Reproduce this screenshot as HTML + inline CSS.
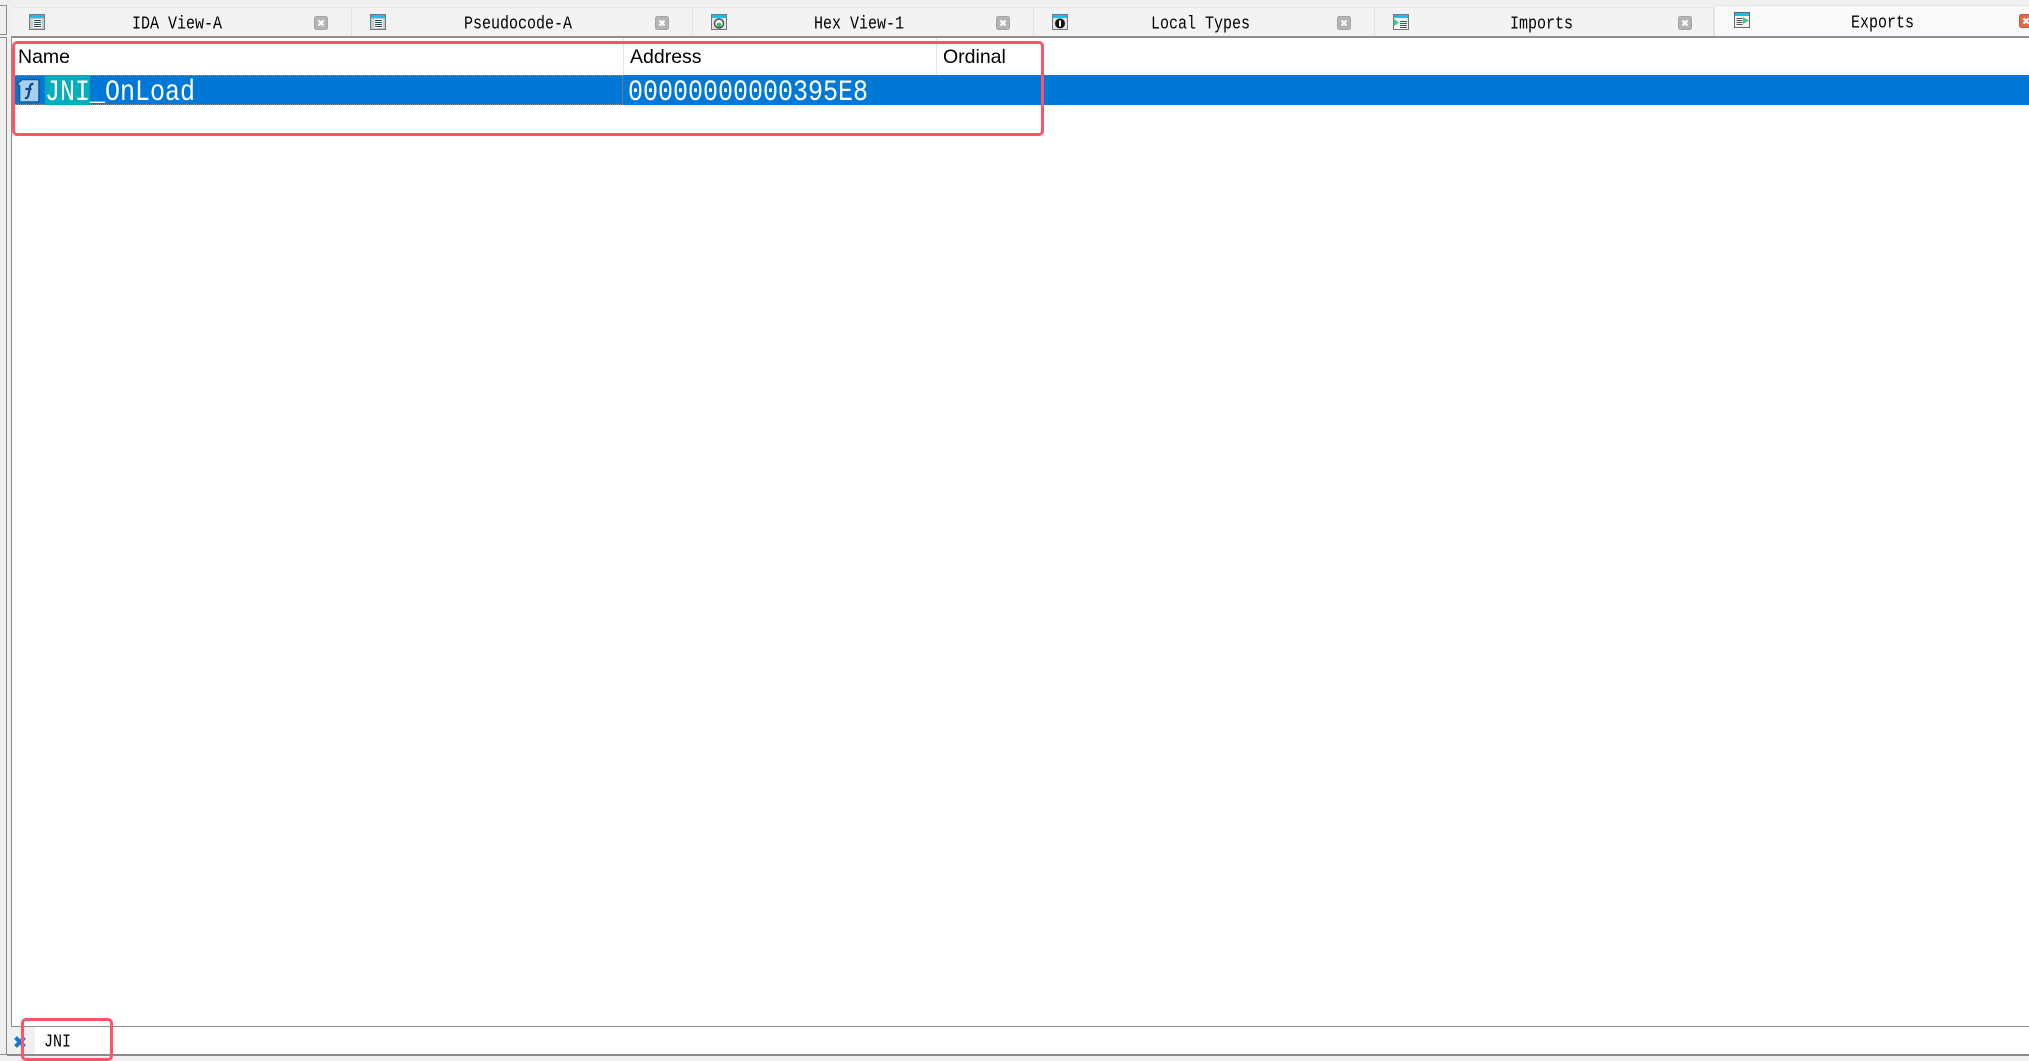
<!DOCTYPE html>
<html><head><meta charset="utf-8"><style>
html,body{margin:0;padding:0;width:2029px;height:1061px;overflow:hidden;background:#f0f0f0}
div,span,svg{position:absolute}
.tab{top:7px;height:29px;background:#f3f3f3;border-top:1px solid #e6e6e6;border-right:1px solid #e2e2e2;box-sizing:border-box}
.t{font:15px "Liberation Mono",monospace;color:#000;white-space:pre;transform:scaleY(1.2);transform-origin:0 50%;line-height:18px;top:16px}
.h{font:19.5px "Liberation Sans",sans-serif;color:#000;top:46px;line-height:22px;white-space:pre}
.r{font:25px "Liberation Mono",monospace;color:#fff;top:79px;line-height:28px;white-space:pre;transform:scaleY(1.2);transform-origin:0 50%}
.x{top:16px;width:14px;height:14px}
.i{top:14px;width:16px;height:16px}
</style></head><body>
<svg width="0" height="0"><defs>
<g id="cl"><rect x=".5" y=".5" width="13" height="13" rx="2" fill="#b4b4b4" stroke="#a4a4a4"/><path d="M4.500 4.500l5 5M9.500 4.500l-5 5" stroke="#fff" stroke-width="2"/></g>
<g id="lst"><rect x=".5" y=".5" width="15" height="15" fill="#c9c9c9" stroke="#777"/><rect x="1" y="1" width="14" height="3" fill="#19bfe6"/><rect x="4" y="5" width="9" height="9" fill="#fff"/><path d="M5 6.500h7M5 8.500h7M5 10.500h7M5 12.500h7" stroke="#2f4a60"/></g>
<g id="hex"><rect x=".5" y=".5" width="15" height="15" fill="#e4e4e4" stroke="#777"/><rect x="1" y="1" width="14" height="3" fill="#19bfe6"/><circle cx="8" cy="9.500" r="4.500" fill="#fff" stroke="#444" stroke-width="1.400"/><circle cx="8" cy="11" r="2.400" fill="#3ab86a"/></g>
<g id="lt"><rect x=".5" y=".5" width="15" height="15" fill="#e4e4e4" stroke="#777"/><rect x="1" y="1" width="14" height="3" fill="#19bfe6"/><circle cx="8" cy="9.500" r="5" fill="#111"/><rect x="7" y="6.500" width="2" height="6" fill="#fff"/></g>
<g id="im"><rect x=".5" y=".5" width="15" height="15" fill="#f4f4f4" stroke="#777"/><rect x="1" y="1" width="14" height="3" fill="#19bfe6"/><path d="M7 7.500h7M7 9.500h7M7 11.500h7M7 13.500h7" stroke="#555"/><path d="M1 5l5 3.500-5 3.500z" fill="#46c88a"/></g>
<g id="ex"><rect x=".5" y=".5" width="15" height="15" fill="#f4f4f4" stroke="#666"/><rect x="1" y="1" width="14" height="3" fill="#19bfe6"/><path d="M2.500 6.500h6M2.500 8.500h6M2.500 10.500h6M2.500 12.500h6" stroke="#555"/><path d="M9 5l6 3.500-6 3.500z" fill="#46c88a"/></g>
</defs></svg>

<div style="left:0;top:5px;width:7px;height:30px;border:1px solid #8c8c8c;border-left:0;box-sizing:border-box"></div>
<div style="left:0;top:37px;width:7px;height:1018px;border:1px solid #8c8c8c;border-left:0;box-sizing:border-box"></div>

<div class="tab" style="left:13px;width:339px"></div>
<div class="tab" style="left:352px;width:341px"></div>
<div class="tab" style="left:693px;width:341px"></div>
<div class="tab" style="left:1034px;width:341px"></div>
<div class="tab" style="left:1375px;width:339px"></div>
<div class="tab" style="left:1714px;top:5px;height:32px;width:315px;background:#f9f9f9;border-right:0;border-left:1px solid #e2e2e2"></div>

<svg class="i" style="left:29px"><use href="#lst"/></svg>
<svg class="i" style="left:370px"><use href="#lst"/></svg>
<svg class="i" style="left:711px"><use href="#hex"/></svg>
<svg class="i" style="left:1052px"><use href="#lt"/></svg>
<svg class="i" style="left:1393px"><use href="#im"/></svg>
<svg class="i" style="left:1734px;top:12px"><use href="#ex"/></svg>

<span class="t" style="left:132px">IDA View-A</span>
<span class="t" style="left:464px">Pseudocode-A</span>
<span class="t" style="left:814px">Hex View-1</span>
<span class="t" style="left:1151px">Local Types</span>
<span class="t" style="left:1510px">Imports</span>
<span class="t" style="left:1851px;top:15px">Exports</span>

<svg class="x" style="left:314px"><use href="#cl"/></svg>
<svg class="x" style="left:655px"><use href="#cl"/></svg>
<svg class="x" style="left:996px"><use href="#cl"/></svg>
<svg class="x" style="left:1337px"><use href="#cl"/></svg>
<svg class="x" style="left:1678px"><use href="#cl"/></svg>
<svg class="x" style="left:2019px;top:14px"><rect x=".5" y=".5" width="13" height="13" rx="2" fill="#e2694a" stroke="#c9553a"/><path d="M4.500 4.500l5 5M9.500 4.500l-5 5" stroke="#fff" stroke-width="2"/></svg>

<!-- main pane -->
<div style="left:11px;top:36px;width:2018px;height:991px;background:#fff;border-top:2px solid #8f8f8f;border-left:1px solid #8c8c8c;border-bottom:1px solid #8a8a94;box-sizing:border-box"></div>
<div style="left:1714px;top:36px;width:315px;height:2px;background:#8f8f98"></div>

<div style="left:623px;top:38px;width:1px;height:37px;background:#e3e3e3"></div>
<div style="left:936px;top:38px;width:1px;height:37px;background:#e3e3e3"></div>
<span class="h" style="left:18px">Name</span>
<span class="h" style="left:630px">Address</span>
<span class="h" style="left:943px">Ordinal</span>

<div style="left:12px;top:75px;width:2017px;height:30px;background:#0078d7"></div>
<div style="left:15px;top:75px;width:608px;height:30px;border:1px dotted #c98a4a;border-left:0;box-sizing:border-box"></div>
<div style="left:45px;top:75px;width:45px;height:30px;background:#00aebd"></div>
<svg style="left:16px;top:78px" width="24" height="25"><path d="M6 1.500h15.500a1.500 1.500 0 0 1 1.500 1.500v20a1 1 0 0 1-1 1H4.500a1 1 0 0 1-1-1V8L1 6z" fill="#a9cfee" stroke="#0e5c9e" stroke-width="1.600"/><path d="M9 20c2 .5 3-1 3.500-3l1.500-8.500c.4-2 1.500-3 3.500-2.500M9.500 11h6" fill="none" stroke="#0c4a86" stroke-width="2.200"/></svg>
<span class="r" style="left:45px">JNI_OnLoad</span>
<span class="r" style="left:628px">00000000000395E8</span>

<!-- filter bar -->
<div style="left:35px;top:1027px;width:1994px;height:27px;background:#fff"></div>
<div style="left:7px;top:1054px;width:2022px;height:2px;background:#8c8c8c"></div>
<div style="left:0;top:1056px;width:2029px;height:5px;background:#f0f0f0"></div>
<svg style="left:13px;top:1035px" width="14" height="14"><path d="M2.500 2.500l9 9M11.500 2.500l-9 9" stroke="#0f7ad6" stroke-width="4"/></svg>
<span class="t" style="left:44px;top:1034px">JNI</span>

<!-- red annotations -->
<div style="left:12px;top:41px;width:1032px;height:95px;border:3px solid #ff5468;border-radius:5px;box-sizing:border-box"></div>
<div style="left:21px;top:1018px;width:92px;height:43px;border:3px solid #ff5468;border-radius:5px;box-sizing:border-box"></div>
</body></html>
